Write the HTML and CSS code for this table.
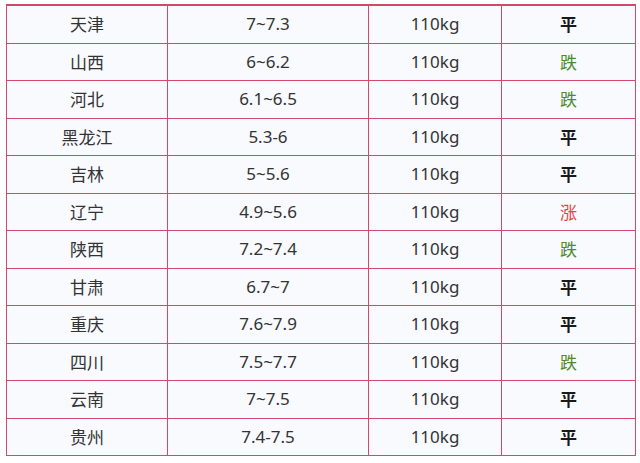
FILE: index.html
```html
<!DOCTYPE html>
<html lang="zh">
<head>
<meta charset="utf-8">
<link rel="stylesheet" href="styles.css">
</head>
<body>
<table class="price-table">
  <colgroup>
    <col class="c1"><col class="c2"><col class="c3"><col class="c4">
  </colgroup>
  <tbody>
    <tr><td>天津</td><td>7~7.3</td><td>110kg</td><td class="flat">平</td></tr>
    <tr><td>山西</td><td>6~6.2</td><td>110kg</td><td class="down">跌</td></tr>
    <tr><td>河北</td><td>6.1~6.5</td><td>110kg</td><td class="down">跌</td></tr>
    <tr><td>黑龙江</td><td>5.3-6</td><td>110kg</td><td class="flat">平</td></tr>
    <tr><td>吉林</td><td>5~5.6</td><td>110kg</td><td class="flat">平</td></tr>
    <tr><td>辽宁</td><td>4.9~5.6</td><td>110kg</td><td class="up">涨</td></tr>
    <tr><td>陕西</td><td>7.2~7.4</td><td>110kg</td><td class="down">跌</td></tr>
    <tr><td>甘肃</td><td>6.7~7</td><td>110kg</td><td class="flat">平</td></tr>
    <tr><td>重庆</td><td>7.6~7.9</td><td>110kg</td><td class="flat">平</td></tr>
    <tr><td>四川</td><td>7.5~7.7</td><td>110kg</td><td class="down">跌</td></tr>
    <tr><td>云南</td><td>7~7.5</td><td>110kg</td><td class="flat">平</td></tr>
    <tr><td>贵州</td><td>7.4-7.5</td><td>110kg</td><td class="flat">平</td></tr>
  </tbody>
</table>
</body>
</html>
```
FILE: styles.css
```css
html, body {
  margin: 0;
  padding: 0;
  background: #ffffff;
}
body {
  padding: 4px 5px 0 6px;
  font-family: "Noto Sans", "Noto Sans CJK SC", sans-serif;
  color: #333333;
}
.price-table {
  width: 629px;
  border-collapse: collapse;
  table-layout: fixed;
  border-top: 2px solid #d4486c;
}
.c1 { width: 161px; }
.c2 { width: 201px; }
.c3 { width: 133px; }
.c4 { width: 134px; }
.price-table td {
  border: 1px solid #d4486c;
  height: 36.5px;
  padding: 0;
  text-align: center;
  vertical-align: middle;
  font-size: 17px;
  line-height: 20px;
  background: #f8fafe;
}
.price-table td:first-child {
  font-family: "Noto Sans CJK SC", sans-serif;
}
.flat {
  font-family: "Noto Sans CJK SC", sans-serif;
  font-weight: 700;
  color: #1a1a1a;
}
.down {
  font-family: "Noto Sans CJK SC", sans-serif;
  color: #4e8a2c;
}
.up {
  font-family: "Noto Sans CJK SC", sans-serif;
  color: #e8413f;
}
```
